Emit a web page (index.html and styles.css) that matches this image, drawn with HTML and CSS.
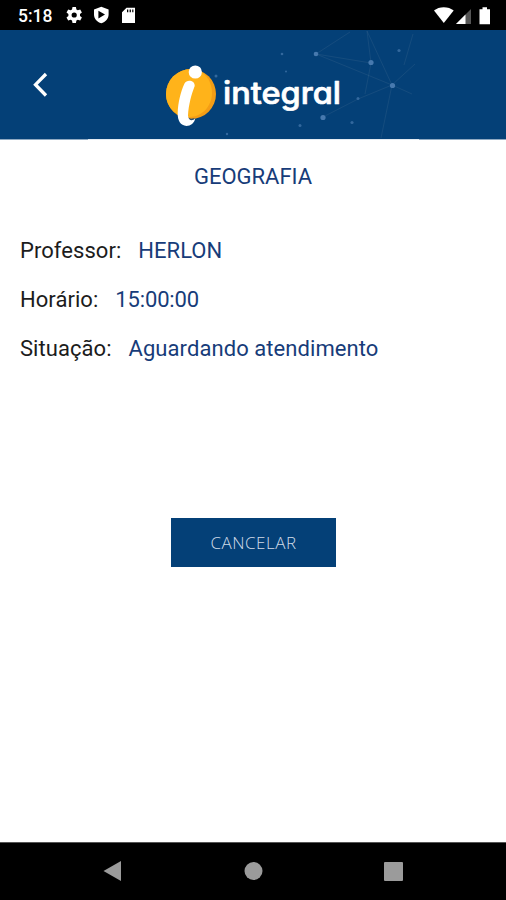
FILE: index.html
```html
<!DOCTYPE html>
<html lang="pt-BR">
<head>
<meta charset="utf-8">
<title>Integral</title>
<link rel="stylesheet" href="styles.css">
</head>
<body>
<div class="screen">
  <div class="status">
    <span class="clock">5:18</span>
    <svg class="status-left" width="64" height="18" viewBox="0 0 64 18">
      <g transform="translate(8.2 9)" fill="#fff">
        <path fill-rule="evenodd" d="M-1.7-8H1.7L2.2-5.6 3.6-4.8 6-5.6 7.7-2.6 5.8-.9V.9L7.7 2.6 6 5.6 3.6 4.8 2.2 5.6 1.7 8H-1.7L-2.2 5.6-3.6 4.8-6 5.6-7.7 2.6-5.8.9V-.9L-7.7-2.6-6-5.6-3.6-4.8-2.2-5.6ZM0-2.6A2.6 2.6 0 1 0 0 2.6A2.6 2.6 0 1 0 0-2.6Z"/>
      </g>
      <path fill="#fff" fill-rule="evenodd" d="M35.3.8 42.6 3.4V8.5C42.6 12.8 39.5 16 35.3 17.3 31 16 28 12.8 28 8.5V3.4ZM32.4 4.8V12.4L39 8.6Z"/>
      <path fill="#fff" fill-rule="evenodd" d="M60.5 1.700H69V17H56V6.200ZM61 3.600V6.300H62.300V3.600ZM63.600 3.600V6.300H64.900V3.600ZM66.200 3.600V6.300H67.400V3.600Z"/>
    </svg>
    <svg class="status-right" width="58" height="18" viewBox="0 0 58 18">
      <path fill="#fff" d="M0 3.6C5-.9 14.5-.9 19.7 3.6L9.8 16.1Z"/>
      <path fill="#555" d="M22 17H37V2Z"/>
      <path fill="#fff" d="M22 17H31.5V7.5Z"/>
      <path fill="#fff" d="M45.500 2.200H48.500V.3H53V2.200H56V17.200H45.500Z"/>
    </svg>
  </div>
  <header class="header">
    <svg width="506" height="110" viewBox="0 30 506 110">
      <g fill="none" stroke="#547598" stroke-width=".8" opacity=".28">
        <path d="M316 54 350 32M316 54 371 63M316 54 392 85 415 64M371 63 367 31 392 85 412 94M392 85 358 99 323 117M392 85 381 138M371 63 365 94M404 65 413 34"/>
      </g>
      <g fill="#4779ae">
        <circle cx="316" cy="54" r="2.300"/><circle cx="371" cy="62.500" r="2.600"/><circle cx="392.500" cy="85.500" r="2.600"/><circle cx="323" cy="117.500" r="2.600"/>
        <g opacity=".7"><circle cx="282" cy="54" r="1.300"/><circle cx="399" cy="50.500" r="1.600"/><circle cx="358" cy="98.500" r="1.500"/><circle cx="352" cy="122.500" r="1.600"/><circle cx="300" cy="125.500" r="1.500"/><circle cx="216" cy="76" r="1.500"/><circle cx="286" cy="71.500" r="1"/><circle cx="227" cy="134" r="1.200"/></g>
      </g>
      <path d="M46 74 35.500 84.700 46 95.500" fill="none" stroke="#fff" stroke-width="3.300"/>
      <circle cx="191" cy="94" r="25" fill="#f49d15"/>
      <path d="M191 69A25 25 0 0 0 166 94C166 108 177 117 189 117C202 117 212 106 212 93C212 83 207 74 198 70Z" fill="#ffb31a"/>
      <path d="M188 117.500Q191 119.500 194 118.300L193 122 188 121Z" fill="#294e70"/>
      <path d="M184.500 83.500C187 79 195 80.500 194.700 86C191.500 94 188.500 105 188 115.500C188.300 120.500 192 121.500 195.300 118.500C194.500 123 190.500 126 186.500 126C180.500 125.500 177.500 120.500 177.700 113C178 103 180.500 92 184.500 83.500Z" fill="#fff"/>
      <circle cx="195.300" cy="72" r="6.600" fill="#fff"/>
      <text class="wordmark" x="223" y="103.500" textLength="118" lengthAdjust="spacingAndGlyphs">integral</text>
      <path d="M0 139.500H88M419 139.500H506" stroke="#8fa9c2" stroke-width="1"/>
      <path d="M88 139.500H419" stroke="#e4ebf2" stroke-width="1"/>
    </svg>
  </header>
  <main class="content">
    <h1 class="subject">GEOGRAFIA</h1>
    <dl class="details">
      <div class="row"><dt>Professor:</dt><dd>HERLON</dd></div>
      <div class="row"><dt>Horário:</dt><dd class="time">15:00:00</dd></div>
      <div class="row"><dt>Situação:</dt><dd class="state">Aguardando atendimento</dd></div>
    </dl>
    <button class="cancel">CANCELAR</button>
  </main>
  <nav class="nav">
    <svg width="506" height="57" viewBox="0 843 506 57" fill="#9b9b9b">
      <path d="M103.500 871 121 861V881Z"/>
      <circle cx="253.500" cy="871" r="9"/>
      <rect x="384" y="862" width="19" height="19" rx="1"/>
    </svg>
  </nav>
</div>
</body>
</html>
```
FILE: styles.css
```css
* { box-sizing: border-box; }
body { margin: 0; background: #fff; font-family: Roboto, "Liberation Sans", sans-serif; }
svg { display: block; }
.screen { width: 506px; height: 900px; display: flex; flex-direction: column; overflow: hidden; }
.status { height: 30px; background: #000; color: #fff; display: flex; align-items: center; padding: 2px 17px 0 18px; }
.clock { width: 48px; font-size: 17.500px; font-weight: 500; line-height: 28px; }
.status-left { overflow: visible; margin-top: -2px; }
.status-right { margin-left: auto; margin-right: -3px; margin-top: -1px; }
.header { height: 110px; background: #044077; }
.wordmark { font-family: Inter, sans-serif; font-size: 31.500px; font-weight: 500; font-feature-settings: "cv11" 1, "ss03" 1; fill: #fff; stroke: #fff; stroke-width: .7px; stroke-linejoin: round; }
.content { flex: 1; display: flex; flex-direction: column; align-items: center; font-size: 22px; }
.subject { margin: 24px 0 0; font-size: 22px; font-weight: 400; line-height: 26px; color: #173c79; }
.details { align-self: stretch; margin: 36px 0 0 20px; letter-spacing: .05px; }
.row { display: flex; gap: 17px; height: 49.200px; line-height: 49.200px; }
.row dt { color: #1c1c1c; }
.row dd { margin: 0; color: #173c79; }
.row .time { letter-spacing: -.15px; }
.row .state { letter-spacing: .07px; }
.cancel { margin: 144px 0 0 1px; width: 165px; height: 49px; padding: 1px 0 0; border: 0; background: #044077; color: #d0dbe8; font-family: "Open Sans", sans-serif; font-weight: 300; font-size: 17px; letter-spacing: .5px; }
.nav { height: 58px; background: #000; border-top: 1px solid #555; }
```
